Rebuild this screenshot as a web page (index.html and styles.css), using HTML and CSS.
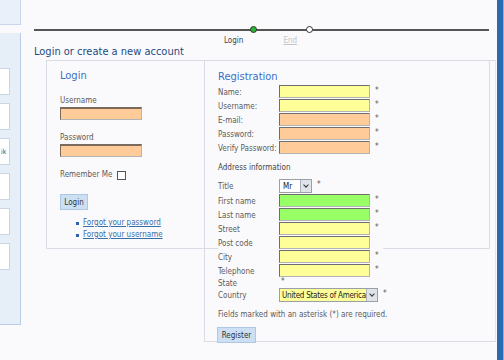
FILE: index.html
```html
<!DOCTYPE html>
<html lang="en">
<head>
  <meta charset="UTF-8">
  <title>Login or create a new account</title>
  <link rel="stylesheet" href="styles.css">
</head>
<body>
  <div class="page">
    <aside class="side">
      <div class="side-top"></div>
      <div class="side-panel">
        <div class="side-item"></div>
        <div class="side-item"></div>
        <div class="side-item"><span>ik</span></div>
        <div class="side-item"></div>
        <div class="side-item"></div>
        <div class="side-item"></div>
      </div>
    </aside>

    <main class="main">
      <div class="steps">
        <div class="track">
          <span class="dot done"></span>
          <span class="dot next"></span>
        </div>
        <div class="step-labels">
          <span class="step-current">Login</span>
          <a href="#" class="step-end">End</a>
        </div>
      </div>

      <h1>Login or create a new account</h1>

      <div class="account">
        <section class="login">
          <h2>Login</h2>
          <label class="field-label">Username</label>
          <input type="text" class="inp orange login-inp">
          <label class="field-label">Password</label>
          <input type="password" class="inp orange login-inp">
          <div class="remember">Remember Me <span class="check"></span></div>
          <button class="btn login-btn">Login</button>
          <ul class="links">
            <li><a href="#">Forgot your password</a></li>
            <li><a href="#">Forgot your username</a></li>
          </ul>
        </section>

        <section class="register">
          <h2>Registration</h2>
          <div class="rows">
            <div class="row"><span class="lbl">Name:</span><input class="inp yellow"><i>*</i></div>
            <div class="row"><span class="lbl">Username:</span><input class="inp yellow"><i>*</i></div>
            <div class="row"><span class="lbl">E-mail:</span><input class="inp orange"><i>*</i></div>
            <div class="row"><span class="lbl">Password:</span><input class="inp orange"><i>*</i></div>
            <div class="row"><span class="lbl">Verify Password:</span><input class="inp orange"><i>*</i></div>
          </div>

          <p class="section-title">Address information</p>

          <div class="rows">
            <div class="row row-sel"><span class="lbl">Title</span><span class="sel title-sel"><span>Mr</span><b></b></span><i>*</i></div>
            <div class="row"><span class="lbl">First name</span><input class="inp green"><i>*</i></div>
            <div class="row"><span class="lbl">Last name</span><input class="inp green"><i>*</i></div>
            <div class="row"><span class="lbl">Street</span><input class="inp yellow"><i>*</i></div>
            <div class="row"><span class="lbl">Post code</span><input class="inp yellow"></div>
            <div class="row"><span class="lbl">City</span><input class="inp yellow"><i>*</i></div>
            <div class="row"><span class="lbl">Telephone</span><input class="inp yellow"><i>*</i></div>
            <div class="row row-state"><span class="lbl">State</span><i>*</i></div>
            <div class="row row-sel"><span class="lbl">Country</span><span class="sel country-sel"><span>United States of America</span><b></b></span><i>*</i></div>
          </div>

          <p class="note">Fields marked with an asterisk (*) are required.</p>
          <button class="btn register-btn">Register</button>
        </section>
      </div>
    </main>

    <div class="edge"></div>
  </div>
</body>
</html>
```

FILE: styles.css
```css
body {
  margin: 0;
  background-color: #fafafd;
  font-family: 'DejaVu Sans Condensed', 'DejaVu Sans', sans-serif;
  font-size: 8px;
  color: #5a5a5a;
}

.page {
  display: flex;
  width: 504px;
  height: 360px;
  overflow: hidden;
}

/* left column, cut off by the window */
.side {
  width: 21px;
  flex-shrink: 0;
}

.side-top {
  height: 25px;
  background-color: #e9f0f9;
  border-right: 1px solid #c7d6ea;
  border-bottom: 1px solid #c7d6ea;
  box-sizing: border-box;
}

.side-panel {
  margin-top: 8px;
  height: 292px;
  padding-top: 35px;
  background-color: #e6eef8;
  border-right: 1px solid #b9cce8;
  border-bottom: 1px solid #b9cce8;
  box-sizing: border-box;
  display: flex;
  flex-direction: column;
  gap: 8px;
}

.side-item {
  width: 10px;
  height: 27px;
  background-color: #fff;
  border: 1px solid #ccd6e2;
  border-left: none;
  box-sizing: border-box;
  display: flex;
  align-items: center;
  padding-left: 1px;
  font-size: 7px;
  color: #555;
}

/* main area */
.main {
  flex: 1;
  padding-left: 13px;
}

.steps {
  margin-top: 26px;
  width: 455px;
}

.track {
  position: relative;
  height: 7px;
}

.track::before {
  content: "";
  position: absolute;
  left: 0;
  right: 0;
  top: 3px;
  height: 2px;
  background-color: #555;
}

.dot {
  position: absolute;
  top: 0;
  width: 7px;
  height: 7px;
  border-radius: 50%;
  box-sizing: border-box;
  border: 1.5px solid #333;
}

.dot.done {
  left: 216px;
  background-color: #22b830;
}

.dot.next {
  left: 272px;
  background-color: #fff;
}

.step-labels {
  display: flex;
  gap: 40px;
  padding-left: 190px;
  margin-top: 3px;
  font-size: 8px;
  line-height: 9px;
}

.step-current {
  color: #444;
}

.step-end {
  color: #c4c4cc;
}

h1 {
  margin: 0 0 1px;
  font-size: 11px;
  line-height: 14px;
  font-weight: normal;
  color: #1d4a80;
}

.account {
  display: flex;
  margin-left: 12px;
  width: 444px;
  height: 189px;
  border: 1px solid #d9dce4;
  box-sizing: border-box;
}

h2 {
  margin: 0;
  font-size: 11px;
  line-height: 14px;
  font-weight: normal;
  color: #3a6fc2;
}

.login {
  width: 157px;
  flex-shrink: 0;
  padding: 8px 0 0 13px;
  box-sizing: border-box;
  display: flex;
  flex-direction: column;
  align-items: flex-start;
}

.login h2 {
  margin-bottom: 13px;
}

.field-label {
  line-height: 10px;
  margin-bottom: 1px;
}

.inp {
  display: block;
  margin: 0;
  padding: 0;
  height: 13px;
  width: 91px;
  box-sizing: border-box;
  border: 1px solid #b4b4b4;
  border-top-color: #6e6e6e;
  border-left-color: #6e6e6e;
  font: inherit;
}

.login-inp {
  width: 82px;
  margin-bottom: 13px;
  border-top-width: 2px;
  border-top-color: #7a6a5c;
  border-left-color: #7a6a5c;
}

.yellow { background-color: #ffff99; }
.orange { background-color: #ffcc99; }
.green  { background-color: #99ff66; }

.remember {
  display: flex;
  align-items: center;
  gap: 5px;
  line-height: 10px;
  margin-bottom: 14px;
}

.check {
  width: 9px;
  height: 9px;
  border: 1px solid #555;
  box-sizing: border-box;
  background-color: #fff;
}

.btn {
  margin: 0;
  padding: 0;
  height: 16px;
  font: inherit;
  font-size: 8px;
  color: #333;
  background-color: #cde0f3;
  border: 1px solid #aec7e2;
  cursor: pointer;
}

.login-btn {
  width: 28px;
}

.links {
  list-style: none;
  margin: 7px 0 0 16px;
  padding: 0;
}

.links li {
  display: flex;
  align-items: center;
  gap: 4px;
  line-height: 12px;
}

.links li::before {
  content: "";
  width: 3px;
  height: 3px;
  background-color: #2f62a8;
}

.links a {
  color: #3a6ea8;
}

/* registration overflows the box below */
.register {
  width: 292px;
  height: 282px;
  flex-shrink: 0;
  margin-top: -1px;
  padding: 9px 0 0 13px;
  box-sizing: border-box;
  border: 1px solid #d9dce4;
  border-right-color: #e4e6ec;
}

.register h2 {
  margin-bottom: 1px;
}

.rows {
  background-color: #fafafd;
  width: 165px;
}

.row {
  display: flex;
  align-items: center;
  height: 14px;
}

.row .inp {
  align-self: flex-start;
}

.lbl {
  width: 61px;
  flex-shrink: 0;
  white-space: nowrap;
}

.row i {
  font-style: normal;
  font-size: 8px;
  color: #555;
  align-self: flex-start;
  margin: 2px 0 0 5px;
  line-height: 8px;
}

.section-title {
  margin: 8px 0 6px;
  line-height: 10px;
  color: #444;
}

.row-sel {
  height: 15px;
}

.sel {
  display: flex;
  align-items: center;
  height: 14px;
  box-sizing: border-box;
  border: 1px solid #9aa0a8;
  background-color: #fff;
  align-self: flex-start;
}

.sel span {
  flex: 1;
  padding-left: 3px;
  color: #222;
  white-space: nowrap;
  overflow: hidden;
}

.sel b {
  width: 10px;
  height: 12px;
  flex-shrink: 0;
  background-color: #dfe3ea;
  border-left: 1px solid #aab0b8;
  position: relative;
}

.sel b::after {
  content: "";
  position: absolute;
  left: 3px;
  top: 3px;
  width: 3px;
  height: 3px;
  border-right: 1.5px solid #333;
  border-bottom: 1.5px solid #333;
  transform: rotate(45deg);
}

.title-sel {
  width: 33px;
}

.country-sel {
  width: 106px;
  background-color: #ffff99;
}

.country-sel span {
  padding-left: 2px;
  letter-spacing: -0.25px;
}

.row-state {
  height: 10px;
}

.row-state i {
  margin: 0 0 0 2px;
}

.note {
  margin: 7px 0 7px;
  line-height: 10px;
}

.register-btn {
  width: 39px;
  margin-left: -1px;
}

.edge {
  width: 7px;
  flex-shrink: 0;
  background-color: #2b6bb0;
  border-right: 1px solid #8fb0d6;
  box-sizing: border-box;
}
```
